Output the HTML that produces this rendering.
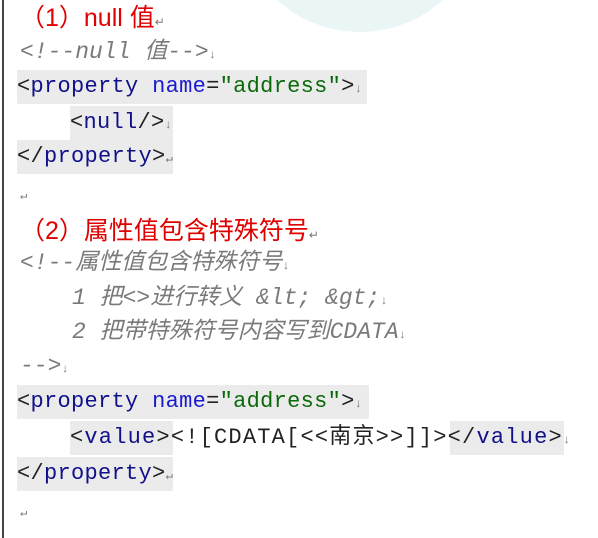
<!DOCTYPE html>
<html><head><meta charset="utf-8"><style>
body{margin:0;width:598px;height:538px;background:#fff;position:relative;overflow:hidden;font-family:"Liberation Mono","Noto Sans CJK SC",monospace;}
.l{position:absolute;white-space:pre;line-height:34px;height:34px;}
.h{background:#ebebeb;}
.red{color:#e00000;font-family:"Liberation Sans","Noto Sans CJK SC",sans-serif;font-size:25px;}
.cm{color:#7a7a7a;font-style:italic;font-size:23px;font-family:"Liberation Mono","Noto Sans CJK SC",monospace;}
.c{font-size:22px;color:#222;letter-spacing:0.3px}
.b{color:#10108a}.n{color:#1a1ad0}.g{color:#0a6a0a}
.m{color:#777;font-size:12px;font-style:normal}
.circ{position:absolute;left:240px;top:-200px;width:240px;height:232px;border-radius:50%;background:#eaf5f5;}
</style></head><body>
<div class="circ"></div>
<div style="position:absolute;left:2px;top:0;width:2px;height:538px;background:#444"></div>
<div class="l red" style="left:20px;top:1px">（1）null 值<span class="m">↵</span></div>
<div class="l cm" style="left:20px;top:35px">&lt;!--null 值--&gt;<span class="m">↓</span></div>
<div class="l c h" style="left:17px;top:70px;width:350px">&lt;<span class="b">property</span> <span class="n">name</span>=<span class="g">"address"</span>&gt;<span class="m">↓</span></div>
<div class="l c h" style="left:70px;top:106px;width:103px">&lt;<span class="b">null</span>/&gt;<span class="m">↓</span></div>
<div class="l c h" style="left:17px;top:140px;width:156px">&lt;/<span class="b">property</span>&gt;<span class="m">↵</span></div>
<div class="l" style="left:20px;top:178px"><span class="m">↵</span></div>
<div class="l red" style="left:20px;top:214px">（2）属性值包含特殊符号<span class="m">↵</span></div>
<div class="l cm" style="left:20px;top:246px">&lt;!--属性值包含特殊符号<span class="m">↓</span></div>
<div class="l cm" style="left:72px;top:281px">1 把&lt;&gt;进行转义 &amp;lt; &amp;gt;<span class="m">↓</span></div>
<div class="l cm" style="left:72px;top:315px">2 把带特殊符号内容写到CDATA<span class="m">↓</span></div>
<div class="l cm" style="left:20px;top:349px">--&gt;<span class="m">↓</span></div>
<div class="l c h" style="left:17px;top:385px;width:352px">&lt;<span class="b">property</span> <span class="n">name</span>=<span class="g">"address"</span>&gt;<span class="m">↓</span></div>
<div class="l c h" style="left:70px;top:421px;width:103px"></div>
<div class="l c h" style="left:450px;top:421px;width:114px"></div>
<div class="l c" style="left:70px;top:421px;letter-spacing:1.2px">&lt;<span class="b">value</span>&gt;&lt;![CDATA[&lt;&lt;南京&gt;&gt;]]&gt;&lt;/<span class="b">value</span>&gt;<span class="m">↓</span></div>
<div class="l c h" style="left:17px;top:457px;width:156px">&lt;/<span class="b">property</span>&gt;<span class="m">↵</span></div>
<div class="l" style="left:20px;top:495px"><span class="m">↵</span></div>
</body></html>
